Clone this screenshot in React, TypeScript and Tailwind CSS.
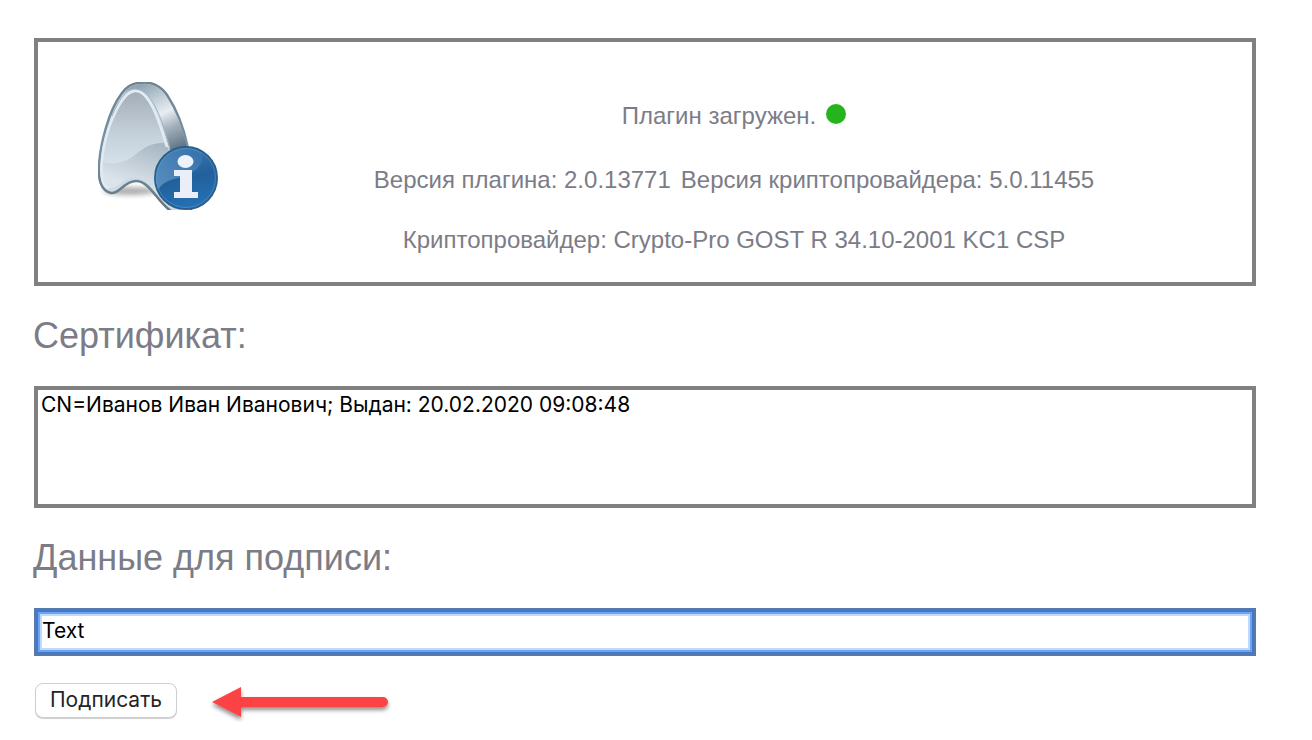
import { useState } from "react";

function PluginInfoIcon() {
  return (
    <svg width="120" height="130" viewBox="0 0 120 130" aria-hidden="true" className="shrink-0">
      <defs>
        <linearGradient id="side" x1="52" y1="0" x2="84" y2="68" gradientUnits="userSpaceOnUse">
          <stop offset="0" stopColor="#92a7b4" />
          <stop offset="0.3" stopColor="#ccd7df" />
          <stop offset="0.45" stopColor="#e8edf1" />
          <stop offset="0.65" stopColor="#a7b4bf" />
          <stop offset="1" stopColor="#586c7e" />
        </linearGradient>
        <linearGradient id="face" x1="35" y1="10" x2="35" y2="92" gradientUnits="userSpaceOnUse">
          <stop offset="0" stopColor="#a4aeb9" />
          <stop offset="0.55" stopColor="#c6d2dc" />
          <stop offset="1" stopColor="#dbe6ee" />
        </linearGradient>
        <linearGradient id="wave" x1="50" y1="60" x2="36" y2="104" gradientUnits="userSpaceOnUse">
          <stop offset="0" stopColor="#a9b8c4" />
          <stop offset="1" stopColor="#dbe4eb" />
        </linearGradient>
        <linearGradient id="edge" x1="0" y1="0" x2="0" y2="128" gradientUnits="userSpaceOnUse">
          <stop offset="0" stopColor="#6f828f" />
          <stop offset="0.5" stopColor="#7593a6" />
          <stop offset="1" stopColor="#66747e" />
        </linearGradient>
        <linearGradient id="disc" x1="80" y1="65" x2="96" y2="128" gradientUnits="userSpaceOnUse">
          <stop offset="0" stopColor="#3c79b0" />
          <stop offset="0.5" stopColor="#22609c" />
          <stop offset="1" stopColor="#2473b6" />
        </linearGradient>
        <linearGradient id="gloss" x1="90" y1="66" x2="66" y2="106" gradientUnits="userSpaceOnUse">
          <stop offset="0" stopColor="#3a77ae" />
          <stop offset="1" stopColor="#6c9fcb" />
        </linearGradient>
        <filter id="soft" x="-30%" y="-60%" width="160%" height="220%">
          <feGaussianBlur stdDeviation="2.5" />
        </filter>
        <clipPath id="bounds">
          <rect width="120" height="128" />
        </clipPath>
        <clipPath id="faceClip">
          <path d="M37 10C25 11 12 40 7 64C3 86 3 104 12 106C21 107 25 94 38 94C51 95 56 110 68 120L92 112L68 62C61 40 50 9 37 10Z" />
        </clipPath>
      </defs>
      <g clipPath="url(#bounds)">
        <ellipse cx="32" cy="109" rx="27" ry="4" fill="#000" opacity="0.32" filter="url(#soft)" />
        <path
          d="M42 1C53 -1 63 4 69 13C79 28 86 47 90 66L93 132L76 131C60 123 53 99 38 99C26 99 22 112 13 111C3 109 0 97 1 84C2 64 10 29 24 11C29 4 36 1 42 1Z"
          fill="#cfdbe4"
          stroke="url(#edge)"
          strokeWidth="2.5"
        />
        <path d="M42 2C53 1 62 5 68 14C78 29 85 48 89 66L72 68C64 40 54 6 36 7C31 7 27 10 24 14C29 6 35 2 42 2Z" fill="url(#side)" />
        <path
          d="M37 10C25 11 12 40 7 64C3 86 3 104 12 106C21 107 25 94 38 94C51 95 56 110 68 120L92 112L68 62C61 40 50 9 37 10Z"
          fill="url(#face)"
        />
        <path d="M0 79C17 84 29 80 38 72C48 64 57 58 78 62V130H0Z" fill="url(#wave)" clipPath="url(#faceClip)" />
        <path
          d="M69 65C61 38 51 8 37 9C24 10 11 40 6 64C2 86 2 104 11 106"
          fill="none"
          stroke="#e3ebf2"
          strokeWidth="2.5"
        />
        <path d="M72 66C64 38 54 7 37 7C28 7 20 19 14 34" fill="none" stroke="#9db4c4" strokeWidth="1" />
        <circle cx="88" cy="96" r="31" fill="url(#disc)" stroke="#2a5f8d" strokeWidth="2" />
        <path d="M58 100A30 30 0 0 1 104 71C107 82 97 92 80 96C70 98 63 102 60 108Z" fill="url(#gloss)" opacity="0.7" />
        <circle cx="88" cy="96" r="29.5" fill="none" stroke="#63a1d1" strokeWidth="1" opacity="0.5" />
        <ellipse cx="87.5" cy="79.500" rx="8" ry="6.500" fill="#eef2f9" />
        <path d="M76 88H94V110H100V116H76V110H82V94H76Z" fill="#e9eef7" />
      </g>
    </svg>
  );
}

function Arrow() {
  return (
    <svg width="188" height="44" viewBox="0 0 188 44" aria-hidden="true">
      <defs>
        <filter id="arrowShadow" x="-10%" y="-20%" width="120%" height="160%">
          <feDropShadow dx="0" dy="3" stdDeviation="2" floodColor="#000" floodOpacity="0.45" />
        </filter>
      </defs>
      <path
        d="M5 24L34 9V19H176A5 5 0 0 1 176 29H34V39Z"
        fill="#fb4344"
        filter="url(#arrowShadow)"
      />
    </svg>
  );
}

export default function App() {
  const [data, setData] = useState("Text");

  return (
    <main className="min-h-screen bg-white pt-[38px] pr-14 pl-[33px] font-['Liberation_Sans',Arial,sans-serif] text-[#7c7c87]">
      <section className="ml-px flex items-start border-4 border-[#808080] pt-10 pb-[26px] pl-[60px] text-2xl">
        <PluginInfoIcon />
        <div className="flex flex-1 flex-col items-center pt-[18px] pr-0.5 text-center leading-8">
          <p className="flex items-center gap-2.5">
            Плагин загружен.
            <span className="mb-1 size-5 rounded-full bg-[#25b41c]" />
          </p>
          <p className="mt-8 flex gap-2.5">
            <span>Версия плагина: 2.0.13771</span>
            <span>Версия криптопровайдера: 5.0.11455</span>
          </p>
          <p className="mt-7">Криптопровайдер: Crypto-Pro GOST R 34.10-2001 KC1 CSP</p>
        </div>
      </section>

      <label htmlFor="certificate" className="mt-7 block text-4xl leading-11">
        Сертификат:
      </label>
      <div className="mt-7 ml-px">
        <select
          id="certificate"
          size={4}
          className="block h-[122px] w-full appearance-none overflow-hidden border-4 border-[#808080] bg-white font-[Inter,sans-serif] text-[21px] text-black outline-none"
        >
          <option className="px-[3px] pt-0.5 pb-0">CN=Иванов Иван Иванович; Выдан: 20.02.2020 09:08:48</option>
        </select>
      </div>

      <label htmlFor="data" className="mt-7 block text-4xl leading-11">
        Данные для подписи:
      </label>
      <div className="mt-7 ml-px">
        <input
          id="data"
          type="text"
          value={data}
          onChange={(e) => setData(e.target.value)}
          className="block h-12 w-full border-4 border-[#4679c4] bg-white px-1 pb-1 font-[Inter,sans-serif] text-[21px] text-black shadow-[inset_0_0_0_2px_#6ca3f5,inset_0_0_0_4px_#c1dafc] outline-2 -outline-offset-2 outline-[#557aae]"
        />
      </div>

      <div className="mt-[22px] ml-0.5 flex items-center gap-[30px]">
        <button
          type="button"
          className="h-[35px] rounded-lg border border-[#cfcfcf] bg-white px-3.5 font-[Inter,sans-serif] text-[21px] leading-8 text-[#252525] shadow-[0_1px_1px_#00000030]"
        >
          Подписать
        </button>
        <Arrow />
      </div>
    </main>
  );
}
